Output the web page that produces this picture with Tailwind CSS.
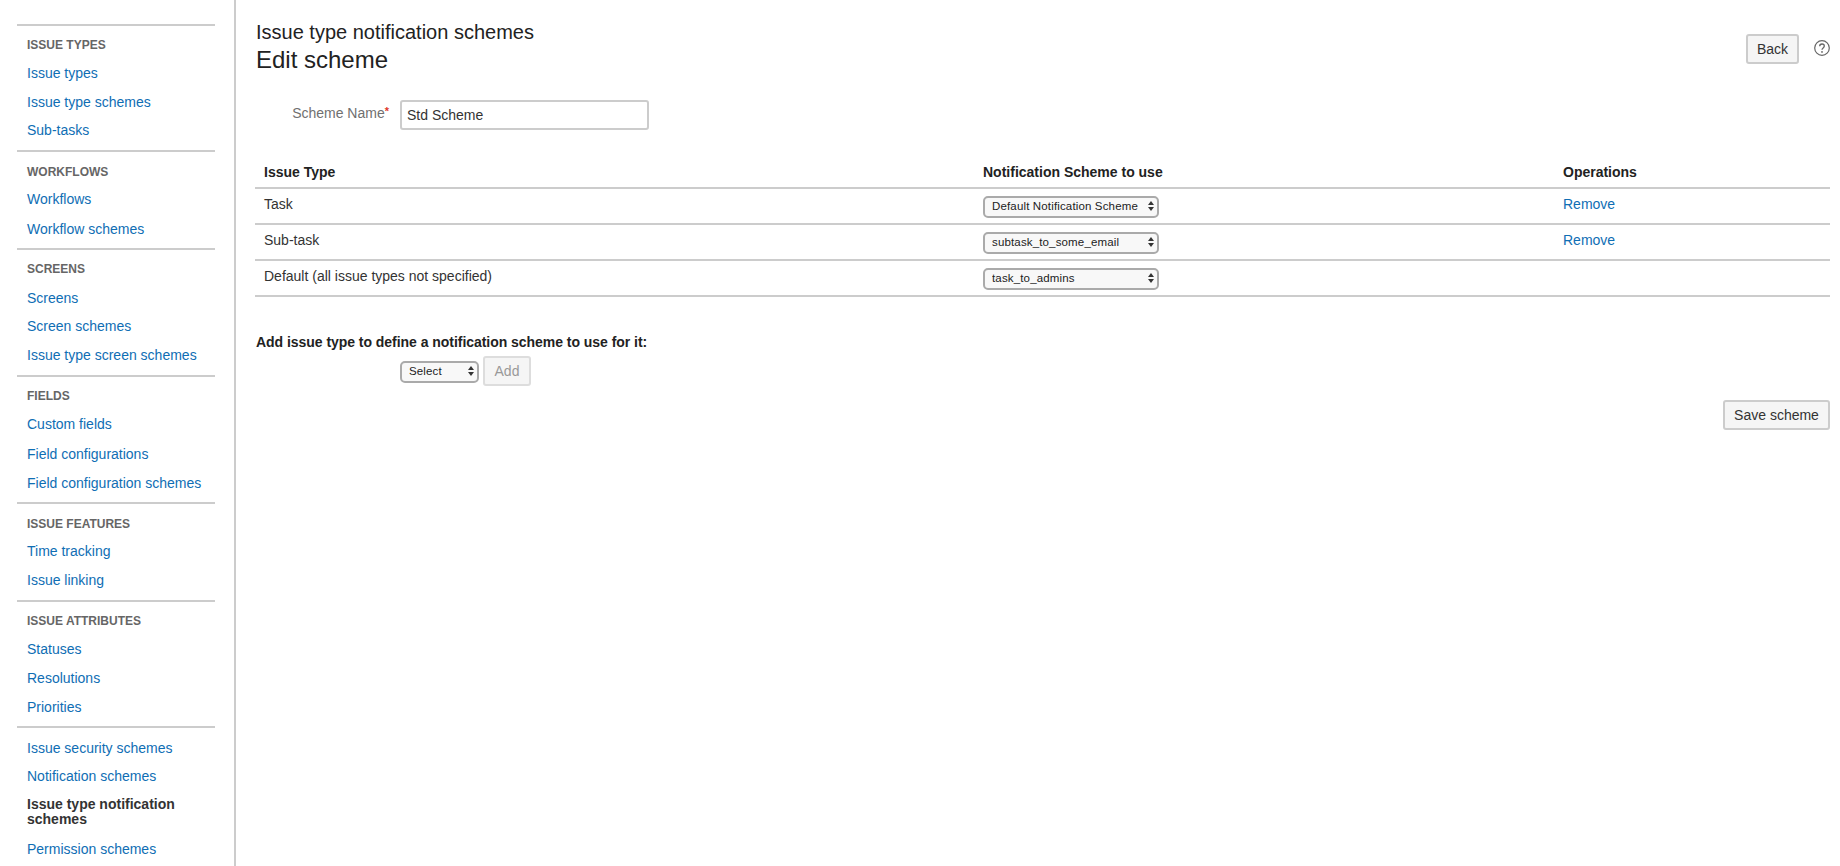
<!DOCTYPE html>
<html lang="en">
<head>
<meta charset="UTF-8">
<title>Edit scheme</title>
<script src="https://cdn.jsdelivr.net/npm/@tailwindcss/browser@4"></script>
</head>
<body class="bg-white font-['Liberation_Sans',Arial,sans-serif] text-[14px] text-[#333] h-[866px] overflow-hidden">
<div class="flex h-[866px]">

  <!-- sidebar -->
  <nav class="w-[236px] shrink-0 border-r-2 border-[#ccc] pl-[17px] pr-[19px] pt-[24px] overflow-hidden">
    <div class="border-t-2 border-[#ccc] h-[126px] pl-[10px] pt-[11px]">
      <h5 class="text-[12px] leading-[16px] font-bold text-[#666] h-[25px]">ISSUE TYPES</h5>
      <a class="block h-[29px] leading-[22px] text-[#0f6eb4]">Issue types</a>
      <a class="block h-[28px] leading-[22px] text-[#0f6eb4]">Issue type schemes</a>
      <a class="block h-[28px] leading-[22px] text-[#0f6eb4]">Sub-tasks</a>
    </div>
    <div class="border-t-2 border-[#ccc] h-[98px] pl-[10px] pt-[12px]">
      <h5 class="text-[12px] leading-[16px] font-bold text-[#666] h-[24px]">WORKFLOWS</h5>
      <a class="block h-[30px] leading-[22px] text-[#0f6eb4]">Workflows</a>
      <a class="block h-[28px] leading-[22px] text-[#0f6eb4]">Workflow schemes</a>
    </div>
    <div class="border-t-2 border-[#ccc] h-[127px] pl-[10px] pt-[11px]">
      <h5 class="text-[12px] leading-[16px] font-bold text-[#666] h-[26px]">SCREENS</h5>
      <a class="block h-[28px] leading-[22px] text-[#0f6eb4]">Screens</a>
      <a class="block h-[29px] leading-[22px] text-[#0f6eb4]">Screen schemes</a>
      <a class="block h-[28px] leading-[22px] text-[#0f6eb4]">Issue type screen schemes</a>
    </div>
    <div class="border-t-2 border-[#ccc] h-[127px] pl-[10px] pt-[11px]">
      <h5 class="text-[12px] leading-[16px] font-bold text-[#666] h-[25px]">FIELDS</h5>
      <a class="block h-[30px] leading-[22px] text-[#0f6eb4]">Custom fields</a>
      <a class="block h-[29px] leading-[22px] text-[#0f6eb4]">Field configurations</a>
      <a class="block h-[28px] leading-[22px] text-[#0f6eb4]">Field configuration schemes</a>
    </div>
    <div class="border-t-2 border-[#ccc] h-[98px] pl-[10px] pt-[12px]">
      <h5 class="text-[12px] leading-[16px] font-bold text-[#666] h-[24px]">ISSUE FEATURES</h5>
      <a class="block h-[29px] leading-[22px] text-[#0f6eb4]">Time tracking</a>
      <a class="block h-[28px] leading-[22px] text-[#0f6eb4]">Issue linking</a>
    </div>
    <div class="border-t-2 border-[#ccc] h-[126px] pl-[10px] pt-[11px]">
      <h5 class="text-[12px] leading-[16px] font-bold text-[#666] h-[25px]">ISSUE ATTRIBUTES</h5>
      <a class="block h-[29px] leading-[22px] text-[#0f6eb4]">Statuses</a>
      <a class="block h-[29px] leading-[22px] text-[#0f6eb4]">Resolutions</a>
      <a class="block h-[28px] leading-[22px] text-[#0f6eb4]">Priorities</a>
    </div>
    <div class="border-t-2 border-[#ccc] pl-[10px] pt-[9px]">
      <a class="block h-[28px] leading-[22px] text-[#0f6eb4]">Issue security schemes</a>
      <a class="block h-[29px] leading-[22px] text-[#0f6eb4]">Notification schemes</a>
      <a class="block font-bold text-[#333] leading-[15px] pt-[3px] h-[44px]">Issue type notification schemes</a>
      <a class="block h-[28px] leading-[22px] text-[#0f6eb4]">Permission schemes</a>
    </div>
  </nav>

  <!-- main -->
  <main class="flex-1 pl-[19px] pr-[11px] min-w-0">
    <header class="flex justify-between h-[100px]">
      <div class="pt-[20px] pl-[1px]">
        <div class="text-[20px] leading-[24px] text-[#222]">Issue type notification schemes</div>
        <h1 class="text-[24px] leading-[32px] text-[#222]">Edit scheme</h1>
      </div>
      <div class="flex items-start pt-[34px] gap-[15px]">
        <button class="h-[30px] w-[53px] border-2 border-[#ccc] rounded-[3px] bg-[#f5f5f5] text-[14px] text-[#333]">Back</button>
        <svg class="mt-[6px] mr-[-1px]" width="16" height="16" viewBox="0 0 16 16" fill="none">
          <circle cx="8" cy="8" r="7.3" stroke="#666" stroke-width="1.2"/>
          <path d="M5.7 6.2C5.7 4.8 6.8 4 8 4s2.3.8 2.3 2.1c0 1.8-2.3 1.8-2.3 3.6" stroke="#666" stroke-width="1.3"/>
          <circle cx="8" cy="11.9" r=".9" fill="#666"/>
        </svg>
      </div>
    </header>

    <div class="flex h-[32px]">
      <label class="w-[134px] text-right pt-[5px] leading-[16px] text-[#707070]">Scheme Name<span class="text-[#e0392b] text-[11px] font-bold align-top leading-[12px]">*</span></label>
      <input class="ml-[11px] w-[249px] h-[30px] border-2 border-[#ccc] rounded-[3px] px-[5px] text-[14px] text-[#333] bg-white" value="Std Scheme">
    </div>

    <table class="w-[1575px] mt-[23px] table-fixed border-collapse">
      <thead>
        <tr class="h-[33px] border-b-2 border-[#ccc]">
          <th class="w-[728px] text-left font-bold pl-[9px] pt-[2px] text-[#222]">Issue Type</th>
          <th class="w-[580px] text-left font-bold pt-[2px] text-[#222]">Notification Scheme to use</th>
          <th class="text-left font-bold pt-[2px] text-[#222]">Operations</th>
        </tr>
      </thead>
      <tbody>
        <tr class="h-[36px] border-b-2 border-[#ccc]">
          <td class="pl-[9px] pb-[4px]">Task</td>
          <td>
            <div class="relative w-[176px] h-[22px]">
              <select class="appearance-none w-full h-full border-2 border-[#aaa] rounded-[5px] bg-[#f8f8f8] pl-[7px] text-[11.5px] tracking-[0.15px] text-[#222]"><option>Default Notification Scheme</option></select>
              <svg class="absolute right-[5px] top-[6px] pointer-events-none" width="6" height="10" viewBox="0 0 6 10" fill="#333"><path d="M3 0l3 4H0zM3 10l3-4H0z"/></svg>
            </div>
          </td>
          <td class="pb-[4px]"><a class="text-[#0f6eb4]">Remove</a></td>
        </tr>
        <tr class="h-[36px] border-b-2 border-[#ccc]">
          <td class="pl-[9px] pb-[4px]">Sub-task</td>
          <td>
            <div class="relative w-[176px] h-[22px]">
              <select class="appearance-none w-full h-full border-2 border-[#aaa] rounded-[5px] bg-[#f8f8f8] pl-[7px] text-[11.5px] tracking-[0.15px] text-[#222]"><option>subtask_to_some_email</option></select>
              <svg class="absolute right-[5px] top-[6px] pointer-events-none" width="6" height="10" viewBox="0 0 6 10" fill="#333"><path d="M3 0l3 4H0zM3 10l3-4H0z"/></svg>
            </div>
          </td>
          <td class="pb-[4px]"><a class="text-[#0f6eb4]">Remove</a></td>
        </tr>
        <tr class="h-[36px] border-b-2 border-[#ccc]">
          <td class="pl-[9px] pb-[4px]">Default (all issue types not specified)</td>
          <td>
            <div class="relative w-[176px] h-[22px]">
              <select class="appearance-none w-full h-full border-2 border-[#aaa] rounded-[5px] bg-[#f8f8f8] pl-[7px] text-[11.5px] tracking-[0.15px] text-[#222]"><option>task_to_admins</option></select>
              <svg class="absolute right-[5px] top-[6px] pointer-events-none" width="6" height="10" viewBox="0 0 6 10" fill="#333"><path d="M3 0l3 4H0zM3 10l3-4H0z"/></svg>
            </div>
          </td>
          <td></td>
        </tr>
      </tbody>
    </table>

    <div class="mt-[36px] pl-[1px] font-bold leading-[18px] tracking-[-0.04px] text-[#222]">Add issue type to define a notification scheme to use for it:</div>
    <div class="flex items-center gap-[4px] pl-[145px] mt-[5px]">
      <div class="relative w-[79px] h-[22px]">
        <select class="appearance-none w-full h-full border-2 border-[#aaa] rounded-[5px] bg-[#f8f8f8] pl-[7px] text-[11.5px] tracking-[0.15px] text-[#222]"><option>Select</option></select>
        <svg class="absolute right-[5px] top-[6px] pointer-events-none" width="6" height="10" viewBox="0 0 6 10" fill="#333"><path d="M3 0l3 4H0zM3 10l3-4H0z"/></svg>
      </div>
      <button class="w-[48px] h-[30px] border-2 border-[#ddd] rounded-[3px] bg-[#f5f5f5] text-[14px] text-[#999]">Add</button>
    </div>
    <div class="flex justify-end w-[1575px] mt-[14px]">
      <button class="w-[107px] h-[30px] border-2 border-[#ccc] rounded-[3px] bg-[#f5f5f5] text-[14px] text-[#333]">Save scheme</button>
    </div>
  </main>
</div>
</body>
</html>
